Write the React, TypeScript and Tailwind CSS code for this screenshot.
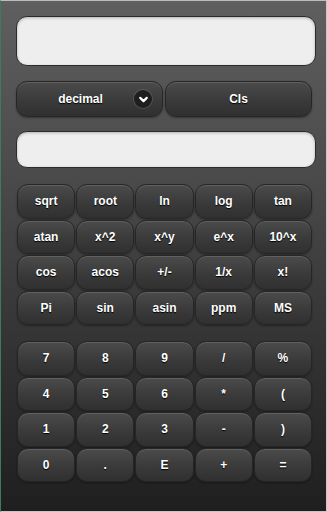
import { ChevronDown } from "lucide-react";

const sci = [
  ["sqrt", "root", "ln", "log", "tan"],
  ["atan", "x^2", "x^y", "e^x", "10^x"],
  ["cos", "acos", "+/-", "1/x", "x!"],
  ["Pi", "sin", "asin", "ppm", "MS"],
];

const basic = [
  ["7", "8", "9", "/", "%"],
  ["4", "5", "6", "*", "("],
  ["1", "2", "3", "-", ")"],
  ["0", ".", "E", "+", "="],
];

const btn =
  "flex items-center justify-center rounded-[11px] border border-[#262626] bg-[linear-gradient(180deg,#4b4b4b_0%,#3a3a3a_55%,#303030_100%)] shadow-[inset_0_1px_0_rgba(255,255,255,0.12),0_1px_2px_rgba(0,0,0,0.35)] text-[12px] font-bold text-white [text-shadow:0_1px_1px_#000]";

function Keys({ rows }: { rows: string[][] }) {
  return (
    <div className="grid grid-cols-5 gap-x-[1px] gap-y-[1px]">
      {rows.flat().map((k, i) => (
        <button key={i} className={`${btn} h-[34.5px]`}>
          {k}
        </button>
      ))}
    </div>
  );
}

export default function App() {
  return (
    <div
      className="h-[512px] w-[327px] overflow-hidden border-t border-r border-b border-l border-t-[#bdbdbd] border-r-[#c8c8c8] border-b-[#c8c8c8] border-l-[#3f7a5c] bg-[linear-gradient(180deg,#5f5f5f_0%,#4a4a4a_35%,#353535_65%,#1f1f1f_100%)]"
      style={{ fontFamily: '"Liberation Sans", Arial, sans-serif' }}
    >
      <div className="flex flex-col pl-[15px] pr-[10px] pt-[15px]">
        <div className="h-[50px] w-[300px] rounded-[11px] border border-[#2b2b2b] bg-[#eeeeee] shadow-[inset_0_1px_3px_rgba(0,0,0,0.25)]" />

        <div className="mt-[15px] flex gap-[2px]">
          <div className={`${btn} relative h-[36px] w-[147px]`}>
            <span className="-ml-[18px]">decimal</span>
            <span className="absolute right-[10px] top-1/2 flex size-[18px] -translate-y-1/2 items-center justify-center rounded-full bg-[#1e1e1e] shadow-[0_0_0_1px_rgba(255,255,255,0.12)]">
              <ChevronDown className="size-[13px] text-white" strokeWidth={4} />
            </span>
          </div>
          <div className={`${btn} h-[36px] w-[147px]`}>Cls</div>
        </div>

        <div className="mt-[14px] h-[37px] w-[300px] rounded-[11px] border border-[#2b2b2b] bg-[#eeeeee] shadow-[inset_0_1px_3px_rgba(0,0,0,0.25)]" />

        <div className="mt-[16px] w-[296px] pl-[1px]">
          <Keys rows={sci} />
        </div>

        <div className="mt-[16px] w-[296px] pl-[1px]">
          <Keys rows={basic} />
        </div>
      </div>
    </div>
  );
}
